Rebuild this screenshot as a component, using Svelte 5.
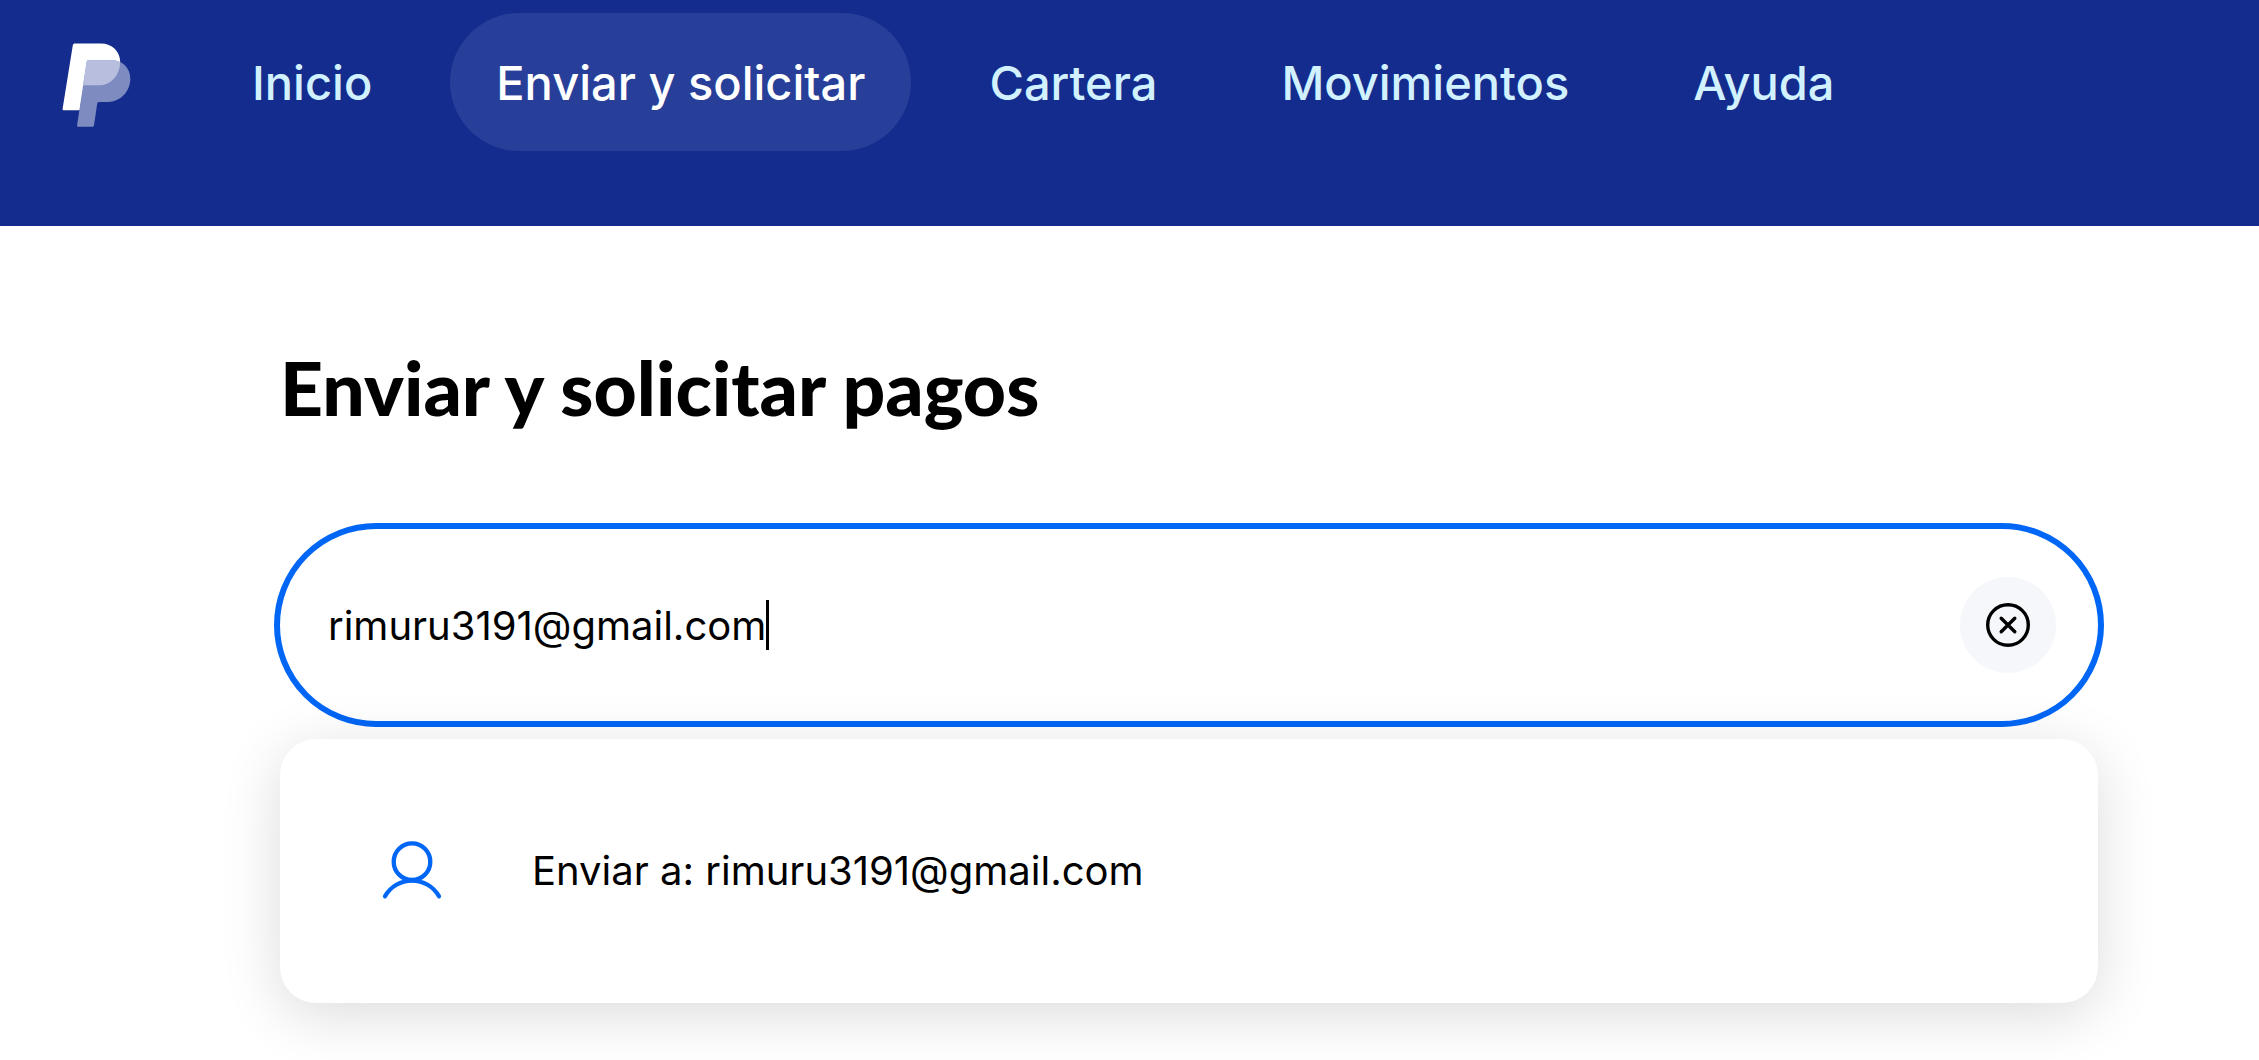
<script>
    const links = [
        { label: 'Inicio', active: false },
        { label: 'Enviar y solicitar', active: true },
        { label: 'Cartera', active: false },
        { label: 'Movimientos', active: false },
        { label: 'Ayuda', active: false }
    ];

    let query = 'rimuru3191@gmail.com';

    function clearQuery() {
        query = '';
    }
</script>

<header class="topbar">
    <a class="logo" href="#inicio" aria-label="PayPal">
        <svg viewBox="60 36 72 92" aria-hidden="true">
            <path fill="#fff" d="M74.8 43.5H101c11 0 19.2 8 19.2 18.500C120 75 111 85.300 99 85.300H84L79.700 110.300H64c-1 0-1.500-.7-1.400-1.600L72.800 45.200c.2-1.100 1-1.700 2-1.700z" />
            <path fill="#7e8bc1" d="M88.500 60.200H112c10.500 0 18.300 8 18.300 18.300 0 13-10 23.400-22 23.400H99.400c-1.300 0-2 .7-2.200 1.800L94 125.200c-.2 1-.9 1.600-1.900 1.600H78.400c-1 0-1.500-.7-1.300-1.600L86.600 61.900c.2-1.100.9-1.700 1.900-1.700z" />
            <path fill="#b8bfde" d="M88.500 60.200H112c3 0 5.600.6 8.100 1.700C120 75 111 85.300 99 85.300H83.100L86.600 61.900c.2-1.100.9-1.700 1.900-1.700z" />
        </svg>
    </a>
    <nav class="nav">
        {#each links as link}
            <a class="nav-link" class:active={link.active} href="#{link.label}">{link.label}</a>
        {/each}
    </nav>
</header>

<main class="content">
    <h1>Enviar y solicitar pagos</h1>

    <div class="search">
        <input type="text" aria-label="Nombre, correo o teléfono" bind:value={query} />
        <span class="caret"></span>
        <button class="clear" type="button" aria-label="Borrar" on:click={clearQuery}>
            <svg viewBox="0 0 48 48" aria-hidden="true">
                <circle cx="24" cy="24" r="20.3" />
                <path d="M17.200 17.200l13.600 13.600M30.800 17.200L17.200 30.800" />
            </svg>
        </button>
    </div>

    <div class="results">
        <button class="result" type="button">
            <svg viewBox="0 0 72 72" aria-hidden="true">
                <circle cx="36" cy="26.700" r="18.300" />
                <path d="M9 61.300a31 31 0 0 1 54 0" />
            </svg>
            <span>Enviar a: {query}</span>
        </button>
    </div>
</main>

<style>
    :global(body) {
        background: #fff;
        color: #000;
        font-family: Inter, "Liberation Sans", sans-serif;
    }

    .topbar {
        display: flex;
        align-items: center;
        gap: 74px;
        padding: 13px 60px 75px;
        background: #142c8e;
    }

    .logo svg {
        display: block;
        width: 72px;
        height: 92px;
    }

    .nav {
        display: flex;
        gap: 32px;
    }

    .nav-link {
        padding: 2px 46px 0;
        border-radius: 69px;
        color: #d1f1ff;
        font-size: 47px;
        font-weight: 500;
        line-height: 136px;
        text-decoration: none;
        white-space: nowrap;
    }

    .nav-link.active {
        background: #273f99;
        color: #fff;
    }

    .content {
        padding: 116px 161px 60px 280px;
    }

    h1 {
        margin: 0 0 97px;
        font-family: Lato, sans-serif;
        font-size: 75px;
        font-weight: 900;
        line-height: 90px;
    }

    .search {
        display: flex;
        align-items: center;
        height: 192px;
        padding: 0 42px 0 48px;
        border-radius: 96px;
        box-sizing: border-box;
        outline: 6px solid #0066f5;
    }

    input {
        field-sizing: content;
        padding: 0;
        border: 0;
        outline: 0;
        background: none;
        color: #000;
        font-family: inherit;
        font-size: 40px;
        caret-color: transparent;
    }

    .caret {
        width: 3px;
        height: 50px;
        background: #000;
    }

    .clear {
        display: flex;
        align-items: center;
        justify-content: center;
        width: 96px;
        height: 96px;
        margin-left: auto;
        padding: 0;
        border: 0;
        border-radius: 50%;
        background: #f5f7fb;
    }

    .clear svg {
        width: 48px;
        height: 48px;
        fill: none;
        stroke: #000;
        stroke-width: 3.4;
        stroke-linecap: round;
    }

    .results {
        position: relative;
        margin-top: 18px;
        border-radius: 36px;
        background: #fff;
        box-shadow: 0 12px 60px rgba(0, 0, 0, 0.14);
    }

    .result {
        display: flex;
        align-items: center;
        gap: 84px;
        width: 100%;
        padding: 96px;
        border: 0;
        background: none;
        color: #000;
        font-family: inherit;
        font-size: 40px;
        line-height: 72px;
        text-align: left;
    }

    .result svg {
        width: 72px;
        height: 72px;
        fill: none;
        stroke: #0066f5;
        stroke-width: 4.3;
        stroke-linecap: round;
    }
</style>
